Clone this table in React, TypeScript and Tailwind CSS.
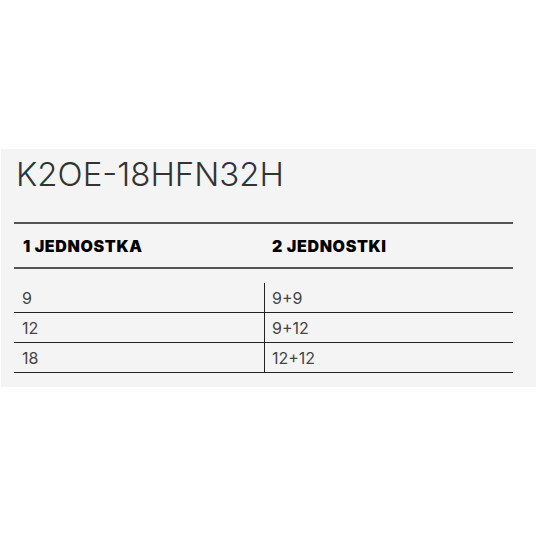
import React from "react";

const rows = [
    ["9", "9+9"],
    ["12", "9+12"],
    ["18", "12+12"],
];

export default function App() {
    return (
        <div className="h-[536px] w-[536px] bg-white pl-px pt-[149px] font-['Inter',sans-serif]">
            <div className="h-[238px] bg-[#f4f4f4] pl-[13px] pr-6 pt-[5px]">
                <div className="ml-[2px] text-[33px] font-light leading-[40px] text-[#333]">
                    K2OE-18HFN32H
                </div>
                <div className="mt-[28px] w-[499px]">
                    <div className="grid h-[47px] grid-cols-[250px_1fr] items-center border-y-2 border-[#555] text-[16px] font-black tracking-[0.04em] text-black">
                        <div className="pl-[9px]">1 JEDNOSTKA</div>
                        <div className="pl-[8px]">2 JEDNOSTKI</div>
                    </div>
                    <div className="mt-[14px]">
                        {rows.map(([a, b], i) => (
                            <div
                                key={i}
                                className="grid h-[30px] grid-cols-[250px_1fr] items-center border-b border-[#222] text-[16px] text-[#444]"
                            >
                                <div className="pl-2">{a}</div>
                                <div className="flex h-full items-center border-l border-[#222] pl-[7px]">
                                    {b}
                                </div>
                            </div>
                        ))}
                    </div>
                </div>
            </div>
        </div>
    );
}
